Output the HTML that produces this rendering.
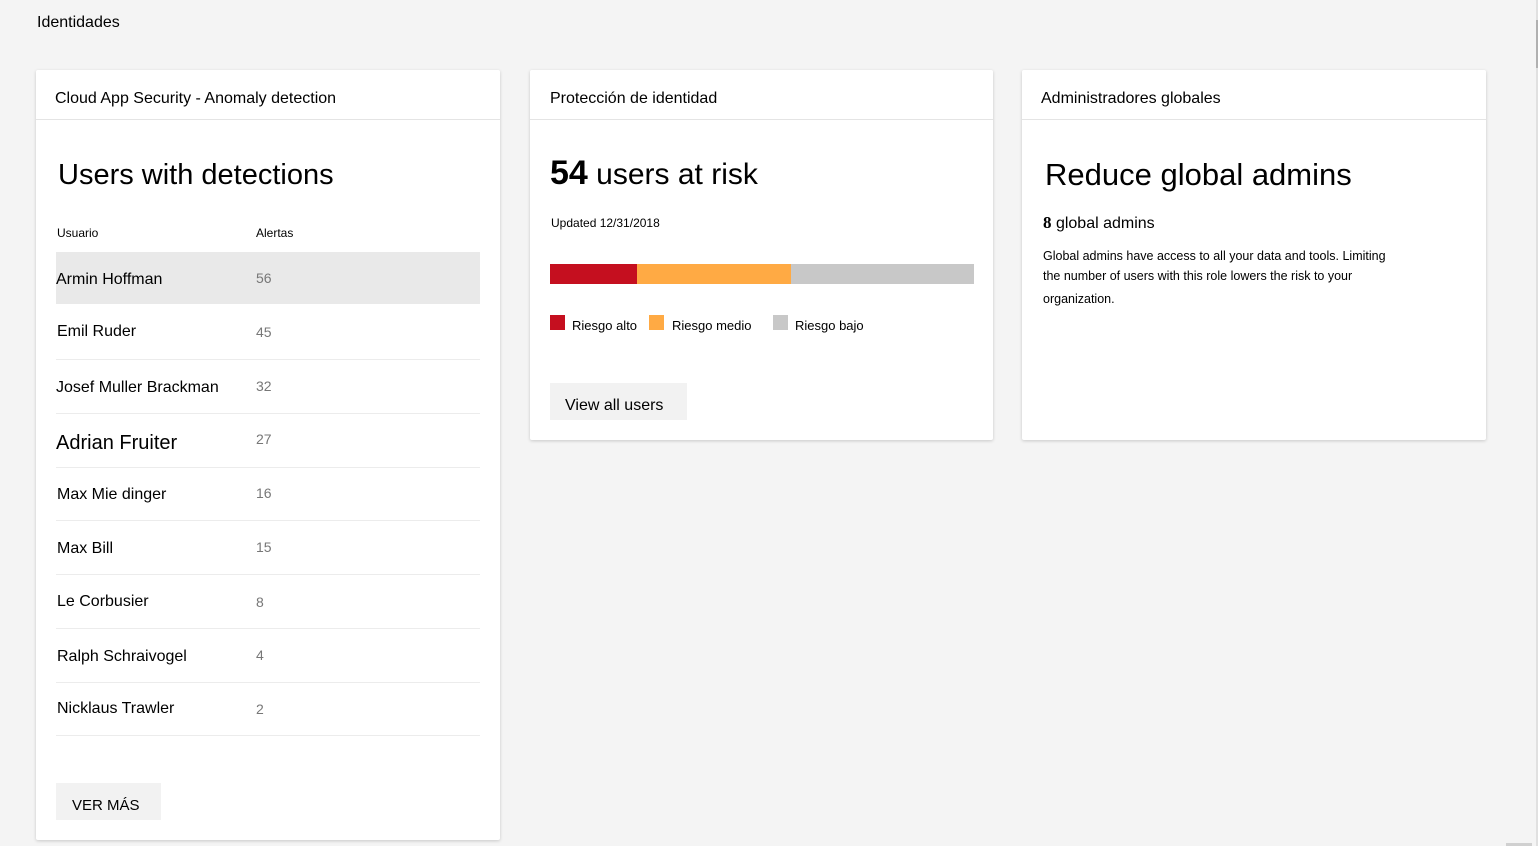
<!DOCTYPE html>
<html><head><style>
*{margin:0;padding:0;box-sizing:border-box}
body{width:1538px;height:846px;background:#f4f4f4;font-family:"Liberation Sans",Arial,sans-serif;color:#000;position:relative;overflow:hidden}
.a{position:absolute;white-space:nowrap}
.card{position:absolute;background:#fff;box-shadow:0 1px 3px rgba(0,0,0,.18);border-radius:2px}
.hd{position:absolute;left:0;right:0;top:49px;border-top:1px solid #e4e4e4}
.row{position:absolute;left:20px;width:424px;height:54px;border-bottom:1px solid #ececec}
.row .n{position:absolute;left:1px;font-size:16px}
.row .v{position:absolute;left:200px;font-size:14px;color:#777}
</style></head><body>
<div class="a" style="left:37px;top:14px;font-size:16px">Identidades</div>

<div class="card" style="left:36px;top:70px;width:464px;height:770px">
 <div class="a" style="left:19px;top:20px;font-size:16px">Cloud App Security - Anomaly detection</div>
 <div class="hd"></div>
 <div class="a" style="left:22px;top:89px;font-size:29px">Users with detections</div>
 <div class="a" style="left:21px;top:156px;font-size:12px">Usuario</div>
 <div class="a" style="left:220px;top:156px;font-size:12px">Alertas</div>
 <div class="row" style="top:182px;height:52px;background:#e9e9e9;border:none"><span class="n" style="top:19px;left:0">Armin Hoffman</span><span class="v" style="top:18px">56</span></div>
 <div class="row" style="top:236px"><span class="n" style="top:17px">Emil Ruder</span><span class="v" style="top:18px">45</span></div>
 <div class="row" style="top:290px"><span class="n" style="top:19px;left:0">Josef Muller Brackman</span><span class="v" style="top:18px">32</span></div>
 <div class="row" style="top:344px"><span class="n" style="top:18px;left:0;font-size:20px">Adrian Fruiter</span><span class="v" style="top:17px">27</span></div>
 <div class="row" style="top:397px"><span class="n" style="top:19px">Max Mie dinger</span><span class="v" style="top:18px">16</span></div>
 <div class="row" style="top:451px"><span class="n" style="top:19px">Max Bill</span><span class="v" style="top:18px">15</span></div>
 <div class="row" style="top:505px"><span class="n" style="top:18px">Le Corbusier</span><span class="v" style="top:19px">8</span></div>
 <div class="row" style="top:559px"><span class="n" style="top:19px">Ralph Schraivogel</span><span class="v" style="top:18px">4</span></div>
 <div class="row" style="top:612px"><span class="n" style="top:18px">Nicklaus Trawler</span><span class="v" style="top:19px">2</span></div>
 <div class="a" style="left:20px;top:713px;width:105px;height:37px;background:#f2f2f2;font-size:15px;padding:14px 0 0 16px">VER MÁS</div>
</div>

<div class="card" style="left:530px;top:70px;width:463px;height:370px">
 <div class="a" style="left:20px;top:20px;font-size:16px">Protección de identidad</div>
 <div class="hd"></div>
 <div class="a" style="left:20px;top:84px;font-size:30px"><b style="font-size:34px">54</b> users at risk</div>
 <div class="a" style="left:21px;top:146px;font-size:12px">Updated 12/31/2018</div>
 <div class="a" style="left:20px;top:194px;width:87px;height:20px;background:#c50f1f"></div>
 <div class="a" style="left:107px;top:194px;width:154px;height:20px;background:#ffaa44"></div>
 <div class="a" style="left:261px;top:194px;width:183px;height:20px;background:#c8c8c8"></div>
 <div class="a" style="left:20px;top:245px;width:15px;height:15px;background:#c50f1f"></div>
 <div class="a" style="left:42px;top:248px;font-size:13px">Riesgo alto</div>
 <div class="a" style="left:119px;top:245px;width:15px;height:15px;background:#ffaa44"></div>
 <div class="a" style="left:142px;top:248px;font-size:13px">Riesgo medio</div>
 <div class="a" style="left:243px;top:245px;width:15px;height:15px;background:#c8c8c8"></div>
 <div class="a" style="left:265px;top:248px;font-size:13px">Riesgo bajo</div>
 <div class="a" style="left:20px;top:313px;width:137px;height:37px;background:#f2f2f2;font-size:16px;padding:14px 0 0 15px">View all users</div>
</div>

<div class="card" style="left:1022px;top:70px;width:464px;height:370px">
 <div class="a" style="left:23px;top:87px;font-size:31px">Reduce global admins</div>
 <div class="a" style="left:19px;top:20px;font-size:16px">Administradores globales</div>
 <div class="hd"></div>
 <div class="a" style="left:21px;top:143px;font-size:16px"><b style="font-size:17px;font-family:'Liberation Serif',serif">8</b> global admins</div>
 <div class="a" style="left:21px;top:176px;font-size:12.5px;line-height:20px">Global admins have access to all your data and tools. Limiting<br>the number of users with this role lowers the risk to your<br><span style="position:relative;top:3px">organization.</span></div>
</div>

<div class="a" style="left:1536px;top:0;width:2px;height:846px;background:#e0e0e0"></div>
<div class="a" style="left:1536px;top:20px;width:2px;height:48px;background:#b0b0b0"></div>
<div class="a" style="left:1506px;top:843px;width:26px;height:3px;background:#d0d0d0"></div>
</body></html>
